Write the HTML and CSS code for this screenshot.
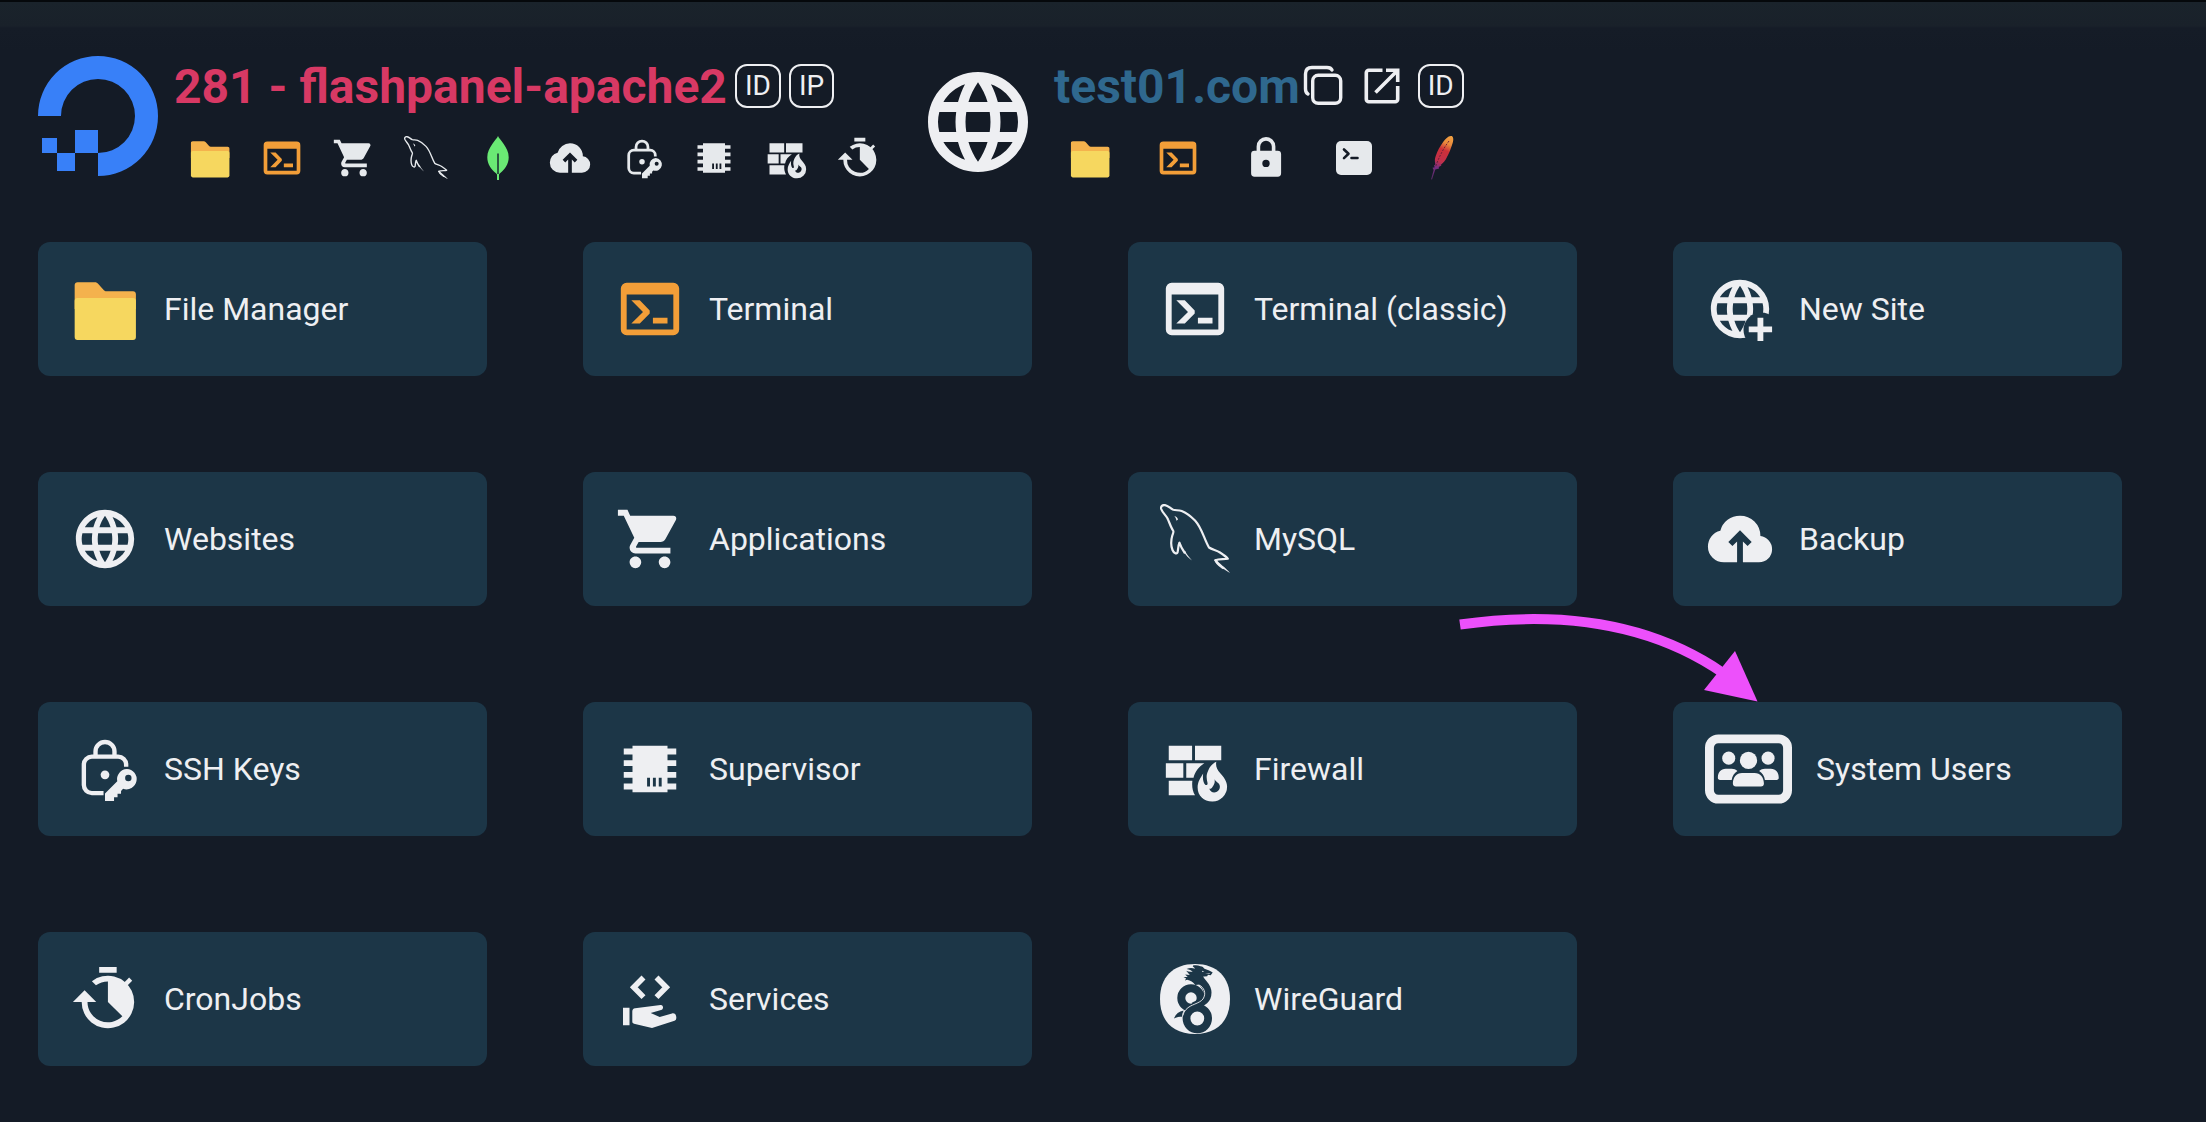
FILE: index.html
```html
<!DOCTYPE html>
<html lang="en">
<head>
<meta charset="utf-8">
<meta name="viewport" content="width=device-width, initial-scale=1">
<title>281 - flashpanel-apache2</title>
<link rel="stylesheet" href="styles.css">
</head>
<body>
<svg class="sprite" aria-hidden="true">
  <symbol id="i-folder" viewBox="0 0 24 24">
    <path fill="#f4b24d" d="M2.6 2.8h5.9c.5 0 .9.2 1.200.6l1.700 1.900c.3.4.6.6 1.100.6h9.100c.6 0 1 .4 1 1V12h-21V3.800c0-.6.4-1 1-1z"/>
    <rect x="1.600" y="8.200" width="21" height="14.400" rx="1" fill="#f6d75f"/>
  </symbol>
  <symbol id="i-terminal" viewBox="0 0 24 24">
    <path fill="currentColor" fill-rule="evenodd" d="M4 3h16a2 2 0 0 1 2 2v14a2 2 0 0 1-2 2H4a2 2 0 0 1-2-2V5a2 2 0 0 1 2-2zm0 4v12h16V7z"/>
    <path fill="currentColor" d="M5.600 9h2.900l3.400 3.500v1L8.500 17H5.600l4-4zM13 15h5v2h-5z"/>
  </symbol>
  <symbol id="i-web" viewBox="0 0 24 24">
    <path fill="currentColor" d="M16.36,14C16.44,13.34 16.5,12.68 16.5,12C16.5,11.32 16.44,10.66 16.36,10H19.74C19.9,10.64 20,11.31 20,12C20,12.69 19.9,13.36 19.74,14M14.59,19.56C15.19,18.45 15.65,17.25 15.97,16H18.92C17.96,17.65 16.43,18.93 14.59,19.56M14.34,14H9.66C9.56,13.34 9.5,12.68 9.5,12C9.5,11.32 9.56,10.65 9.66,10H14.34C14.43,10.65 14.5,11.32 14.5,12C14.5,12.68 14.43,13.34 14.34,14M12,19.96C11.17,18.76 10.5,17.43 10.09,16H13.91C13.5,17.43 12.83,18.76 12,19.96M8,8H5.080C6.03,6.34 7.57,5.06 9.4,4.440C8.8,5.55 8.35,6.75 8,8M5.080,16H8C8.35,17.25 8.8,18.45 9.4,19.56C7.57,18.93 6.03,17.65 5.080,16M4.26,14C4.1,13.36 4,12.69 4,12C4,11.31 4.1,10.64 4.26,10H7.64C7.56,10.66 7.5,11.32 7.5,12C7.5,12.68 7.56,13.34 7.64,14M12,4.03C12.83,5.23 13.5,6.57 13.91,8H10.09C10.5,6.57 11.17,5.23 12,4.03M18.92,8H15.97C15.65,6.75 15.19,5.55 14.59,4.440C16.43,5.07 17.96,6.34 18.92,8M12,2C6.47,2 2,6.5 2,12A10,10 0 0,0 12,22A10,10 0 0,0 22,12A10,10 0 0,0 12,2Z"/>
  </symbol>
  <mask id="m-plus" maskUnits="userSpaceOnUse" x="0" y="0" width="24" height="24">
    <rect width="24" height="24" fill="#fff"/><circle cx="19.200" cy="19.200" r="6" fill="#000"/>
  </mask>
  <symbol id="i-newsite" viewBox="0 0 24 24">
    <g mask="url(#m-plus)"><use href="#i-web" width="24" height="24"/></g>
    <path fill="currentColor" d="M18 15h2v3h3v2h-3v3h-2v-3h-3v-2h3z"/>
  </symbol>
  <symbol id="i-cart" viewBox="0 0 24 24">
    <path fill="currentColor" d="M17,18C15.89,18 15,18.89 15,20A2,2 0 0,0 17,22A2,2 0 0,0 19,20C19,18.89 18.1,18 17,18M1,2V4H3L6.6,11.59L5.24,14.04C5.09,14.32 5,14.65 5,15A2,2 0 0,0 7,17H19V15H7.42A0.25,0.25 0 0,1 7.17,14.75C7.17,14.7 7.18,14.66 7.2,14.63L8.1,13H15.55C16.3,13 16.96,12.58 17.3,11.97L20.88,5.5C20.95,5.34 21,5.17 21,5A1,1 0 0,0 20,4H5.21L4.27,2M7,18C5.89,18 5,18.89 5,20A2,2 0 0,0 7,22A2,2 0 0,0 9,20C9,18.89 8.1,18 7,18Z"/>
  </symbol>
  <symbol id="i-mysql" viewBox="0 0 70 70">
    <g fill="none" stroke="currentColor" stroke-width="2.200" stroke-linejoin="round" stroke-linecap="round">
      <path d="M24.500 48.500C22 45 20.500 42 19.400 38.700 18 42 18.200 46 17.500 48.500 16.500 50.500 13.500 48.500 12.500 46 10.500 41 11 36 12.300 31.500 13 29.500 13.800 28 13.300 27 11 23.500 9.500 19 8 15.500 6.500 11.500 2.500 9 1.200 5 .5 2.200 2.500.8 5 1.100 8.500 1.600 10.500 4.800 13.300 5.800 16 6.600 18.500 5.800 21.700 7 27 9 31.500 13 35 16.500 42 24 44 35 49 43.500 52 45.500 57 46.500 60 48.500 63 50.500 66 52.500 67.800 54.600 64 55.600 59 54.500 55.500 56.300"/>
      <path d="M55.500 56.300C57 60 60.500 62 63 64"/>
    </g>
    <path fill="currentColor" d="M54.500 56l2-.6c2 3.600 9.500 8.200 13.500 13.600-4-2.500-7.500-4.500-10-6.500s-4.700-4-5.500-6.500zM23.700 47.500l1.500-.6c1.500 3.500 3.800 6 6.800 9.600-3.500-2.500-6.500-5.500-8.300-9zM14.300 12c2 .2 3.300 1.800 3.700 3.500l-1.500 1.300c-.2-2-1-3.300-2.200-4.800z"/>
  </symbol>
  <symbol id="i-leaf" viewBox="0 0 44 44">
    <path fill="#6ae974" d="M22 0c1 2.200 3 4.200 5.500 7.800 3 4.200 5.200 8.500 5.200 13.500 0 6.500-3.700 12.200-8.700 16L23 38.500V44h-2v-5.500l-1-1.200c-5-3.800-8.700-9.500-8.700-16 0-5 2.200-9.300 5.200-13.500C19 4.200 21 2.200 22 0z"/>
    <path fill="#2c5a41" d="M21 17.500h2V38h-2z"/>
  </symbol>
  <symbol id="i-cloud" viewBox="0 0 24 24">
    <path fill="currentColor" d="M11 20H6.500Q4.220 20 2.610 18.430 1 16.850 1 14.580 1 12.630 2.170 11.100 3.350 9.570 5.250 9.150 5.880 6.850 7.750 5.430 9.630 4 12 4 14.930 4 16.960 6.040 19 8.070 19 11 20.730 11.200 21.860 12.500 23 13.780 23 15.500 23 17.380 21.690 18.690 20.380 20 18.500 20H13V12.850L14.600 14.400 16 13 12 9 8 13 9.400 14.400 11 12.850Z"/>
  </symbol>
  <symbol id="i-keys" viewBox="0 0 24 24">
    <g fill="none" stroke="currentColor" stroke-width="1.500">
      <path d="M8.750 7.500V6a3.250 3.250 0 0 1 6.500 0v1.500"/>
      <path d="M19.250 11.200v-.7a2.750 2.750 0 0 0-2.750-2.750h-9A2.750 2.750 0 0 0 4.750 10.500v7a2.750 2.750 0 0 0 2.750 2.750h4"/>
    </g>
    <circle cx="12" cy="14" r="1.500" fill="currentColor"/>
    <path fill="currentColor" fill-rule="evenodd" d="M19.500 12a3.500 3.500 0 1 1-1.300 6.800l-.7.700v1h-1.200v1.200h-1.200V23H12v-2.600l4.200-4.200A3.500 3.500 0 0 1 19.500 12zm.5 2a1.100 1.100 0 1 0 0 2.200 1.100 1.100 0 0 0 0-2.200z"/>
  </symbol>
  <symbol id="i-chip" viewBox="0 0 24 24">
    <path fill="currentColor" d="M6,4H18V5H21V7H18V9H21V11H18V13H21V15H18V17H21V19H18V20H6V19H3V17H6V15H3V13H6V11H3V9H6V7H3V5H6V4M11,15V18H12V15H11M13,15V18H14V15H13M15,15V18H16V15H15Z"/>
  </symbol>
  <symbol id="i-wall" viewBox="0 0 24 24">
    <path fill="currentColor" d="M3 4h8v5H3zM12 4h9v5h-9zM2 10h6v5H2zM9 10h6.200c-2 1.300-3.300 3-3.700 5H9zM3 16h8.100c-.2 1.800 0 3.500.9 5H3z"/>
    <path fill="currentColor" fill-rule="evenodd" d="M19.300 9.500c-.3 1.600.3 2.700 1.300 3.900 1.200 1.400 2.400 2.700 2.400 4.700a5 5 0 0 1-5.100 5c-2.900 0-5-2-5-4.800 0-1.900.9-3.200 1.900-4.800-.2 1.500-.1 3 .7 3.900.4.300.9 0 .8-.6-.3-1.300-.6-2.500.2-4.200.5-1.300 1.400-2.500 2.800-3.100zM18.700 15.500c.2 1.200-.1 1.700-.5 2.300-.3.500-.5 1-1.300 1 .4 1.200 1.600 1.600 2.600 1 1.100-.6 1.300-1.900.7-2.700-.5-.6-1.100-.8-1.500-1.600z"/>
  </symbol>
  <symbol id="i-timer" viewBox="0 0 24 24">
    <path fill="currentColor" d="M10 1h6v2h-6zM5 9l4 4H6a7 7 0 0 0 11.950 4.950L13 13V6a7 7 0 0 0-4.100 1.300L7.500 5.900A9 9 0 1 1 4 13H1z"/>
    <path stroke="currentColor" stroke-width="1.500" d="M18.300 7.700L20.800 5.200"/>
  </symbol>
  <symbol id="i-lock" viewBox="0 0 44 44">
    <path fill="none" stroke="currentColor" stroke-width="3.600" d="M14.400 16v-5.500a7.600 7.600 0 0 1 15.200 0V16"/>
    <path fill="currentColor" fill-rule="evenodd" d="M10.500 14.700h23.200a3.400 3.400 0 0 1 3.400 3.400v19.200a3.400 3.400 0 0 1-3.400 3.400H10.500a3.400 3.400 0 0 1-3.400-3.400V18.100a3.400 3.400 0 0 1 3.400-3.400zM22 23.700a3.700 3.700 0 1 0 0 7.400 3.700 3.700 0 0 0 0-7.400z"/>
  </symbol>
  <symbol id="i-console" viewBox="0 0 44 44">
    <rect x="4" y="5" width="36" height="34" rx="5" fill="currentColor"/>
    <path fill="none" stroke="#141b26" stroke-width="2.600" stroke-linecap="round" stroke-linejoin="round" d="M12 13.500l4.500 4.300-4.500 4.300M19.500 22h6"/>
  </symbol>
  <linearGradient id="g-feather" gradientUnits="userSpaceOnUse" x1="32" y1="0" x2="13" y2="40">
    <stop offset="0" stop-color="#f3a443"/><stop offset=".2" stop-color="#e98a3c"/><stop offset=".36" stop-color="#cd3038"/><stop offset=".64" stop-color="#c0304c"/><stop offset=".78" stop-color="#7a2e80"/><stop offset="1" stop-color="#5c2b6b"/>
  </linearGradient>
  <symbol id="i-feather" viewBox="0 0 44 44">
    <path fill="url(#g-feather)" d="M31.700 0C34 1 33.500 5 32 9c-1.500 4.500-3 8.500-5 12-1.600 3.500-3.700 6-6.300 7.900l.8.600-2.800 1.600.4 1.500-3.800.8L12 43.500l-.9-.2 2.500-9.300-1.100-2.200 2.200-.6-.7-1.600 1.300-1c-.6-3-.7-5.500.6-9C17.500 14.500 20 10.500 23.300 5.700 25.500 2.600 28.500-.3 31.700 0z"/>
    <path fill="none" stroke="#6d2038" stroke-width="1" stroke-dasharray="2 1.300" d="M29 5C23 13 19 21 15.500 31"/>
  </symbol>
  <symbol id="i-copy" viewBox="0 0 44 44">
    <g fill="none" stroke="currentColor" stroke-width="3.400" stroke-linecap="round">
      <rect x="10.700" y="11.300" width="28" height="28" rx="5.500"/>
      <path d="M6 30c-1.800-1-2.500-2.500-2.500-5V10c0-4.500 2-6.500 6.500-6.500h15c2.500 0 4.200.8 5 2.500"/>
    </g>
  </symbol>
  <symbol id="i-open" viewBox="0 0 44 44">
    <g fill="none" stroke="currentColor" stroke-width="3.600">
      <path d="M22.500 6.300H8.800a2.500 2.500 0 0 0-2.500 2.500v26.400a2.500 2.500 0 0 0 2.500 2.500h26.400a2.500 2.500 0 0 0 2.500-2.500V22"/>
      <path d="M26 6.300h11.700V18M15.500 28.500L37.500 6.500"/>
    </g>
  </symbol>
  <symbol id="i-users" viewBox="0 0 88 70">
    <rect x="4.500" y="4.500" width="79" height="61" rx="9" fill="none" stroke="currentColor" stroke-width="9"/>
    <g fill="currentColor">
      <circle cx="24" cy="24" r="6.600"/><circle cx="63.800" cy="24" r="6.600"/><circle cx="44" cy="26.300" r="8.700"/>
      <path d="M21 34.800h6c2.200 0 4.200.8 5.800 2.200-3.200 2-5.300 5.300-5.800 9H15.200c-1.400 0-2.200-.9-2.200-2.200 0-5.300 3-9 8-9zM66.600 34.800h-6c-2.200 0-4.200.8-5.800 2.200 3.200 2 5.300 5.300 5.800 9h11.800c1.400 0 2.200-.9 2.200-2.200 0-5.300-3-9-8-9zM37.500 39h12.600c6 0 9.500 4.700 9.500 10.700 0 2-1.100 3-3 3H31.200c-1.800 0-3-1-3-3 0-6 3.500-10.700 9.300-10.700z"/>
    </g>
  </symbol>
  <symbol id="i-services" viewBox="0 0 70 70">
    <path fill="none" stroke="currentColor" stroke-width="5.600" d="M28.500 13.500l-9.700 9.800 9.700 9.800M41.500 13.500l9.700 9.800-9.700 9.800"/>
    <path fill="currentColor" d="M8 43.700h6.500v17.600H8zM17.300 47.500c0-2 1-3 2.800-3.200l25.500-3.400c1.600-.2 2.500 1 2.400 2.500-.1 1.400-.8 2.200-2 2.500L35.700 49l9 4 12.300-3.600c2.600-.6 4.500 1.300 4.300 4.400 0 1.700-.5 2.400-1.800 2.900L37 64l-18-4.200c-1.200-.4-1.700-1-1.700-2.200z"/>
  </symbol>
  <symbol id="i-wireguard" viewBox="0 0 70 70">
    <path fill="currentColor" d="M35 0c22 0 35 13 35 35S57 70 35 70 0 57 0 35 13 0 35 0z"/>
    <g fill="none" class="serpent">
      <circle cx="31" cy="34" r="9.700" stroke-width="8"/>
      <path stroke-width="8" d="M39 13c2 6 8.500 8 8.500 15.500 0 9-7.500 10.500-14 14"/>
      <circle cx="37.300" cy="54.500" r="10.800" stroke-width="7.800"/>
    </g>
    <path fill="none" stroke="currentColor" stroke-width=".9" d="M38.500 20.500c6 3 8 9 4.500 14.500-4 5-12 5-17 10.500-1.800 2-2.600 4-3 6"/>
    <path class="serpent-fill" d="M33 1.600c2.500-.7 5-.4 7.500.6 2 .2 3 1.200 4 2.600 2.500 1 5.500 1.500 8.200 3.800l-2 2.600-2.800-.4-.7 1.400-5.700.5c-1 .7-1.200 1.500-.8 2.800l3.500 4.500-9 1c-2-2.600-4.700-4.700-8-5.200l-2.300.6 1.200-1.900-2.600-1.500h4.200l-2.500-2.400 4.600.4-3.600-4.200c2 .9 4 1.300 6.500.8-2-1.200-2.800-2.200-6.200-2.600 3-1.200 5.700-1.200 8.700-.2-.7-1-1.300-1.600-2.400-2.400zM14 54.500c1.500-4.300 4.700-7.200 9.700-8-1 2-1.600 4-1.700 6.300-2.500-.5-5 .1-8 1.700z"/>
    <path fill="currentColor" d="M42 6.800l2.300.8-2 .5zM45 10l5.300-.8-1 .9z"/>
  </symbol>
</svg>

<div class="page">
  <header class="header">
    <section class="entity">
      <a class="logo" href="#" aria-label="DigitalOcean">
        <svg viewBox="0 0 120 120">
          <path fill="#3880f8" d="M0 60a60 60 0 1 1 60 60V97a37 37 0 1 0-37-37zM37 74h23v23H37zM4 82h15v15H4zM19 97h18v18H19z"/>
        </svg>
      </a>
      <div class="entity-body">
        <div class="entity-title">
          <h1 class="name name-server">281 - flashpanel-apache2</h1>
          <button class="badge" type="button">ID</button>
          <button class="badge" type="button">IP</button>
        </div>
        <nav class="shortcuts" aria-label="Server shortcuts">
          <a href="#" aria-label="File Manager"><svg><use href="#i-folder"/></svg></a>
          <a class="orange" href="#" aria-label="Terminal"><svg><use href="#i-terminal"/></svg></a>
          <a href="#" aria-label="Applications"><svg><use href="#i-cart"/></svg></a>
          <a href="#" aria-label="MySQL"><svg><use href="#i-mysql"/></svg></a>
          <a href="#" aria-label="MongoDB"><svg><use href="#i-leaf"/></svg></a>
          <a href="#" aria-label="Backup"><svg><use href="#i-cloud"/></svg></a>
          <a href="#" aria-label="SSH Keys"><svg><use href="#i-keys"/></svg></a>
          <a href="#" aria-label="Supervisor"><svg><use href="#i-chip"/></svg></a>
          <a href="#" aria-label="Firewall"><svg><use href="#i-wall"/></svg></a>
          <a href="#" aria-label="CronJobs"><svg><use href="#i-timer"/></svg></a>
        </nav>
      </div>
    </section>
    <section class="entity">
      <a class="logo" href="#" aria-label="Website"><svg><use href="#i-web"/></svg></a>
      <div class="entity-body">
        <div class="entity-title entity-title-site">
          <h2 class="name name-site">test01.com</h2>
          <div class="actions">
            <button class="icon-button" type="button" aria-label="Copy"><svg><use href="#i-copy"/></svg></button>
            <a class="icon-button" href="#" aria-label="Open site"><svg><use href="#i-open"/></svg></a>
            <button class="badge" type="button">ID</button>
          </div>
        </div>
        <nav class="shortcuts shortcuts-site" aria-label="Site shortcuts">
          <a href="#" aria-label="File Manager"><svg><use href="#i-folder"/></svg></a>
          <a class="orange" href="#" aria-label="Terminal"><svg><use href="#i-terminal"/></svg></a>
          <a href="#" aria-label="SSL"><svg><use href="#i-lock"/></svg></a>
          <a href="#" aria-label="Console"><svg><use href="#i-console"/></svg></a>
          <a href="#" aria-label="Apache"><svg><use href="#i-feather"/></svg></a>
        </nav>
      </div>
    </section>
  </header>

  <main class="tiles">
    <a class="tile" href="#"><svg><use href="#i-folder"/></svg><span>File Manager</span></a>
    <a class="tile" href="#"><svg class="orange"><use href="#i-terminal"/></svg><span>Terminal</span></a>
    <a class="tile" href="#"><svg><use href="#i-terminal"/></svg><span>Terminal (classic)</span></a>
    <a class="tile" href="#"><svg><use href="#i-newsite"/></svg><span>New Site</span></a>
    <a class="tile" href="#"><svg><use href="#i-web"/></svg><span>Websites</span></a>
    <a class="tile" href="#"><svg><use href="#i-cart"/></svg><span>Applications</span></a>
    <a class="tile" href="#"><svg><use href="#i-mysql"/></svg><span>MySQL</span></a>
    <a class="tile" href="#"><svg><use href="#i-cloud"/></svg><span>Backup</span></a>
    <a class="tile" href="#"><svg><use href="#i-keys"/></svg><span>SSH Keys</span></a>
    <a class="tile" href="#"><svg><use href="#i-chip"/></svg><span>Supervisor</span></a>
    <a class="tile" href="#"><svg><use href="#i-wall"/></svg><span>Firewall</span></a>
    <a class="tile" href="#"><svg class="wide"><use href="#i-users"/></svg><span>System Users</span>
      <svg class="pointer" viewBox="0 0 310 90" aria-hidden="true">
        <path fill="none" stroke="#ed50fb" stroke-width="10" d="M5 12.500Q165-10 268 61"/>
        <path fill="#ed50fb" d="M302.500 89.500L249 78l31-39z"/>
      </svg>
    </a>
    <a class="tile" href="#"><svg><use href="#i-timer"/></svg><span>CronJobs</span></a>
    <a class="tile" href="#"><svg><use href="#i-services"/></svg><span>Services</span></a>
    <a class="tile" href="#"><svg><use href="#i-wireguard"/></svg><span>WireGuard</span></a>
  </main>
</div>
</body>
</html>
```
FILE: styles.css
```css
:root {
  --bg: #141b26;
  --tile: #1c3647;
  --text: #eeeff2;
  --icon: #e6e9ec;
  --orange: #f29e38;
}

* { box-sizing: border-box; }

body {
  margin: 0;
  background: var(--bg);
  color: var(--text);
  font-family: Roboto, "Liberation Sans", sans-serif;
}

.sprite { position: absolute; width: 0; height: 0; }

a { color: inherit; text-decoration: none; }

svg { display: block; }

.page {
  min-height: 100vh;
  padding: 54px 84px 56px 38px;
  border-top: 2px solid #05080b;
  background: linear-gradient(#1a232b, #19212a 24px, #151c27 26px, var(--bg) 50px);
}

.header {
  display: flex;
  flex-wrap: wrap;
  gap: 24px;
  margin-bottom: 60px;
}

.entity { display: flex; gap: 16px; }

.logo svg { width: 120px; height: 120px; }

.entity:last-child .logo { padding-top: 6px; color: var(--text); }

.entity-body { display: flex; flex-direction: column; gap: 20px; }

.entity-title {
  display: flex;
  align-items: center;
  gap: 8px;
  height: 60px;
}

.entity-title-site { gap: 2px; }

.actions { display: flex; align-items: center; gap: 14px; }

.name {
  margin: 0;
  padding-top: 2px;
  font-size: 48px;
  line-height: 56px;
  font-weight: 700;
  white-space: nowrap;
}

.name-server { color: #d83964; }
.name-site { color: #2f688e; }

.badge {
  height: 44px;
  padding: 0 8px;
  border: 2px solid var(--text);
  border-radius: 12px;
  background: none;
  color: var(--text);
  font: 28px/40px Roboto, "Liberation Sans", sans-serif;
}

.icon-button {
  padding: 0;
  border: 0;
  background: none;
  color: var(--text);
}

.icon-button svg,
.shortcuts svg { width: 44px; height: 44px; }

.shortcuts {
  display: flex;
  gap: 28px;
  padding: 0 14px;
  color: var(--icon);
}

.shortcuts-site { gap: 44px; }

.orange { color: var(--orange); }

.tiles {
  display: grid;
  grid-template-columns: repeat(4, 1fr);
  gap: 96px;
}

.tile {
  position: relative;
  display: flex;
  align-items: center;
  gap: 24px;
  padding: 32px;
  border-radius: 12px;
  background: var(--tile);
  font-size: 32px;
  line-height: 40px;
  white-space: nowrap;
}

.tile svg { flex: none; width: 70px; height: 70px; }

.tile .wide { width: 87px; }

.tile .pointer {
  position: absolute;
  left: -218px;
  top: -90px;
  width: 310px;
  height: 90px;
}

.serpent { stroke: var(--tile); }
.serpent-fill { fill: var(--tile); }
```
